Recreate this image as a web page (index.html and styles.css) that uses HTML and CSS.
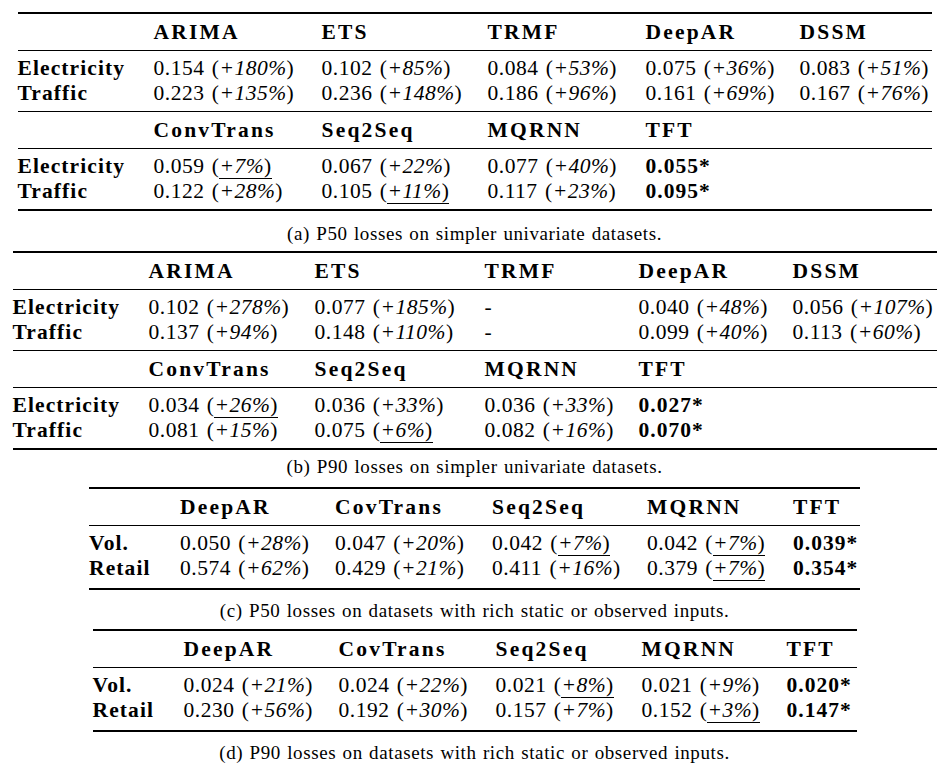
FILE: index.html
```html
<!DOCTYPE html>
<html>
<head>
<meta charset="utf-8">
<link rel="stylesheet" href="styles.css">
</head>
<body>
<div class="page">

  <div class="tbl tbl-a">
    <div class="hrow">
      <span></span><b>ARIMA</b><b>ETS</b><b>TRMF</b><b>DeepAR</b><b>DSSM</b>
    </div>
    <div class="data">
      <div class="row"><b class="lab">Electricity</b><span>0.154 (<i>+180%</i>)</span><span>0.102 (<i>+85%</i>)</span><span>0.084 (<i>+53%</i>)</span><span>0.075 (<i>+36%</i>)</span><span>0.083 (<i>+51%</i>)</span></div>
      <div class="row"><b class="lab">Traffic</b><span>0.223 (<i>+135%</i>)</span><span>0.236 (<i>+148%</i>)</span><span>0.186 (<i>+96%</i>)</span><span>0.161 (<i>+69%</i>)</span><span>0.167 (<i>+76%</i>)</span></div>
    </div>
    <div class="hrow">
      <span></span><b>ConvTrans</b><b>Seq2Seq</b><b>MQRNN</b><b>TFT</b><span></span>
    </div>
    <div class="data last">
      <div class="row"><b class="lab">Electricity</b><span>0.059 (<span class="ul"><i>+7%</i>)</span></span><span>0.067 (<i>+22%</i>)</span><span>0.077 (<i>+40%</i>)</span><b class="best">0.055*</b><span></span></div>
      <div class="row"><b class="lab">Traffic</b><span>0.122 (<i>+28%</i>)</span><span>0.105 (<span class="ul"><i>+11%</i>)</span></span><span>0.117 (<i>+23%</i>)</span><b class="best">0.095*</b><span></span></div>
    </div>
  </div>
  <p class="cap cap-a">(a) P50 losses on simpler univariate datasets.</p>

  <div class="tbl tbl-b">
    <div class="hrow">
      <span></span><b>ARIMA</b><b>ETS</b><b>TRMF</b><b>DeepAR</b><b>DSSM</b>
    </div>
    <div class="data">
      <div class="row"><b class="lab">Electricity</b><span>0.102 (<i>+278%</i>)</span><span>0.077 (<i>+185%</i>)</span><span>-</span><span>0.040 (<i>+48%</i>)</span><span>0.056 (<i>+107%</i>)</span></div>
      <div class="row"><b class="lab">Traffic</b><span>0.137 (<i>+94%</i>)</span><span>0.148 (<i>+110%</i>)</span><span>-</span><span>0.099 (<i>+40%</i>)</span><span>0.113 (<i>+60%</i>)</span></div>
    </div>
    <div class="hrow">
      <span></span><b>ConvTrans</b><b>Seq2Seq</b><b>MQRNN</b><b>TFT</b><span></span>
    </div>
    <div class="data last">
      <div class="row"><b class="lab">Electricity</b><span>0.034 (<span class="ul"><i>+26%</i>)</span></span><span>0.036 (<i>+33%</i>)</span><span>0.036 (<i>+33%</i>)</span><b class="best">0.027*</b><span></span></div>
      <div class="row"><b class="lab">Traffic</b><span>0.081 (<i>+15%</i>)</span><span>0.075 (<span class="ul"><i>+6%</i>)</span></span><span>0.082 (<i>+16%</i>)</span><b class="best">0.070*</b><span></span></div>
    </div>
  </div>
  <p class="cap cap-b">(b) P90 losses on simpler univariate datasets.</p>

  <div class="tbl tbl-c">
    <div class="hrow">
      <span></span><b>DeepAR</b><b>CovTrans</b><b>Seq2Seq</b><b>MQRNN</b><b>TFT</b>
    </div>
    <div class="data last">
      <div class="row"><b class="lab">Vol.</b><span>0.050 (<i>+28%</i>)</span><span>0.047 (<i>+20%</i>)</span><span>0.042 (<span class="ul"><i>+7%</i>)</span></span><span>0.042 (<span class="ul"><i>+7%</i>)</span></span><b class="best">0.039*</b></div>
      <div class="row"><b class="lab">Retail</b><span>0.574 (<i>+62%</i>)</span><span>0.429 (<i>+21%</i>)</span><span>0.411 (<i>+16%</i>)</span><span>0.379 (<span class="ul"><i>+7%</i>)</span></span><b class="best">0.354*</b></div>
    </div>
  </div>
  <p class="cap cap-c">(c) P50 losses on datasets with rich static or observed inputs.</p>

  <div class="tbl tbl-d">
    <div class="hrow">
      <span></span><b>DeepAR</b><b>CovTrans</b><b>Seq2Seq</b><b>MQRNN</b><b>TFT</b>
    </div>
    <div class="data last">
      <div class="row"><b class="lab">Vol.</b><span>0.024 (<i>+21%</i>)</span><span>0.024 (<i>+22%</i>)</span><span>0.021 (<span class="ul"><i>+8%</i>)</span></span><span>0.021 (<i>+9%</i>)</span><b class="best">0.020*</b></div>
      <div class="row"><b class="lab">Retail</b><span>0.230 (<i>+56%</i>)</span><span>0.192 (<i>+30%</i>)</span><span>0.157 (<i>+7%</i>)</span><span>0.152 (<span class="ul"><i>+3%</i>)</span></span><b class="best">0.147*</b></div>
    </div>
  </div>
  <p class="cap cap-d">(d) P90 losses on datasets with rich static or observed inputs.</p>

</div>
</body>
</html>
```

FILE: styles.css
```css
html, body {
  margin: 0;
  padding: 0;
  background: #ffffff;
}

body {
  font-family: "Liberation Serif", "DejaVu Serif", "Times New Roman", serif;
  color: #000000;
  font-size: 21.5px;
}

.page {
  padding-top: 12px;
  width: 949px;
}

.tbl {
  margin: 0 auto;
  border-top: 2px solid #000;
  border-bottom: 2px solid #000;
}

.hrow,
.row {
  display: grid;
  align-items: center;
  white-space: nowrap;
}

.hrow {
  height: 36px;
  border-bottom: 1px solid #000;
}

.hrow b {
  font-weight: bold;
  letter-spacing: 2.2px;
}

.data {
  padding: 5px 0 5px;
  border-bottom: 1px solid #000;
}

.data.last {
  border-bottom: none;
}

.row {
  height: 25px;
  letter-spacing: 0.5px;
  word-spacing: 1.5px;
}

.lab {
  font-weight: bold;
  letter-spacing: 1.1px;
}

.best {
  font-weight: bold;
  letter-spacing: 1px;
}

i {
  font-style: italic;
}

.ul {
  border-bottom: 1px solid #000;
}

.tbl-a {
  width: 914px;
}
.tbl-a .hrow,
.tbl-a .row {
  grid-template-columns: 136px 168px 166px 158px 154px 132px;
}

.tbl-b {
  width: 924px;
}
.tbl-b .hrow,
.tbl-b .row {
  grid-template-columns: 136px 166px 170px 154px 154px 144px;
}

.tbl-c {
  width: 771px;
}
.tbl-c .hrow,
.tbl-c .row {
  grid-template-columns: 91px 155px 157px 155px 146px 67px;
}
.tbl-c .data {
  padding-bottom: 7px;
}

.tbl-d {
  width: 764px;
}
.tbl-d .hrow,
.tbl-d .row {
  grid-template-columns: 91px 155px 157px 146px 145px 70px;
}
.tbl-d .data {
  padding-bottom: 7px;
}

.cap {
  margin: 0;
  text-align: center;
  font-size: 19px;
  line-height: 22px;
  letter-spacing: 0.6px;
  word-spacing: 1px;
}

.cap-a {
  padding: 12px 0 6px;
}

.cap-b {
  padding: 6px 0 9px;
}

.cap-c {
  padding: 10px 0 7px;
}

.cap-d {
  padding: 10px 0 0;
}
```
